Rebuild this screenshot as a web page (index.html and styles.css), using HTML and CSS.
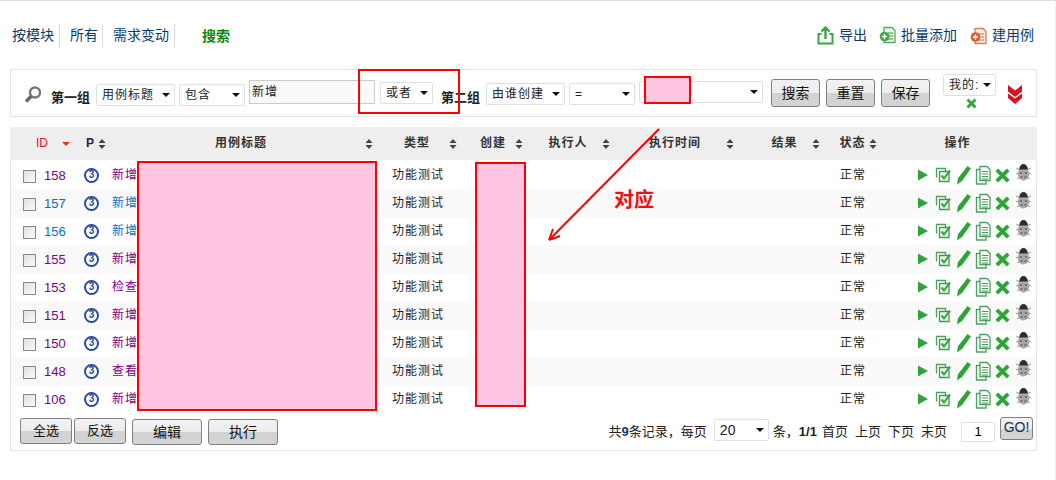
FILE: index.html
```html
<!DOCTYPE html>
<html lang="zh">
<head>
<meta charset="utf-8">
<title>用例列表</title>
<link rel="stylesheet" href="styles.css">
</head>
<body>
<svg class="defs" width="0" height="0" aria-hidden="true">
  <symbol id="sort" viewBox="0 0 9 11"><path d="M4.500 0 8.500 4.500H.5ZM.5 6.500h8L4.500 11Z" fill="#444"/></symbol>
  <symbol id="play" viewBox="0 0 14 14"><path d="M2 1.500 12 7 2 12.500Z" fill="#2ea43a"/></symbol>
  <symbol id="check" viewBox="0 0 16 16"><path d="M1.500 10.500v-9h9v3" fill="none" stroke="#4aa35a" stroke-width="1.300"/><path d="M4.500 4.500h9.500v10H4.500z" fill="#eef7ef" stroke="#3f9c4f" stroke-width="1.300"/><path d="M6.500 8.500 9 11.500 15 3.500" fill="none" stroke="#2ea43a" stroke-width="2"/></symbol>
  <symbol id="pen" viewBox="0 0 16 20"><path d="M11.500 1 15 3.500 6 16 1 19.500 1.800 13.500Z" fill="#2ea43a"/></symbol>
  <symbol id="doc" viewBox="0 0 16 20"><path d="M5 1.500h7l3 3v11H5Z" fill="#fff" stroke="#4aa35a" stroke-width="1.300"/><path d="M5 4.500H1.500v14.500H11v-3.500" fill="none" stroke="#4aa35a" stroke-width="1.300"/><path d="M7 6.500h6M7 9h6M7 11.500h6M7 14h6" stroke="#3f9c4f"/></symbol>
  <symbol id="del" viewBox="0 0 15 15"><path d="M1.800 1.800 13.200 13.200M13.200 1.800 1.800 13.200" stroke="#2ea43a" stroke-width="3.800"/></symbol>
  <symbol id="bug" viewBox="0 0 15 17"><path d="M0 4 4 6M15 4 11 6M0 9.500h3M15 9.500h-3M1 15l3-2M14 15l-3-2" stroke="#999"/><ellipse cx="7.500" cy="10" rx="5.800" ry="6.500" fill="#a8a8a8"/><path d="M3 5.500Q4 0 7.500 0T12 5.500Z" fill="#2e2e2e"/><circle cx="5" cy="9" r="1.100" fill="#666"/><circle cx="10" cy="9" r="1.100" fill="#666"/><circle cx="5.500" cy="13" r="1.100" fill="#666"/><circle cx="9.500" cy="13" r="1.100" fill="#666"/></symbol>
</svg>

<div class="page">
  <header class="topbar">
    <nav class="tabs">
      <a class="tab">按模块</a>
      <a class="tab">所有</a>
      <a class="tab">需求变动</a>
      <a class="tab-active">搜索</a>
    </nav>
    <div class="actions">
      <a class="action">
        <svg class="action-icon" width="17" height="19" viewBox="0 0 17 19"><path d="M4.500 8H1.500v9.500h14V8h-3" fill="none" stroke="#3aa544" stroke-width="2"/><path d="M8.500 13V2M4.500 5.500 8.500 1.500l4 4" fill="none" stroke="#3aa544" stroke-width="2.400"/></svg>
        <span>导出</span>
      </a>
      <a class="action">
        <svg class="action-icon" width="17" height="19" viewBox="0 0 17 19"><path d="M5 1.500h8l3 3v12H5Z" fill="#eaf5ea" stroke="#5aa765" stroke-width="1.300"/><path d="M9 7h5M9 10h5M9 13h5" stroke="#3d8f4b"/><circle cx="5.500" cy="10.500" r="4.800" fill="#3aa544"/><path d="M2.800 10.500h5.400M5.500 7.800v5.400" stroke="#fff" stroke-width="1.500"/></svg>
        <span>批量添加</span>
      </a>
      <a class="action">
        <svg class="action-icon" width="17" height="19" viewBox="0 0 17 19"><path d="M5 2.500h8l3 3v12H5Z" fill="#fbeee6" stroke="#dd7b50" stroke-width="1.300"/><path d="M9 8h5M9 11h5M9 14h5" stroke="#d9693a"/><circle cx="5.500" cy="11" r="4.800" fill="#e0592a"/><path d="M2.800 11h5.400M5.500 8.300v5.400" stroke="#fff" stroke-width="1.500"/></svg>
        <span>建用例</span>
      </a>
    </div>
  </header>

  <section class="search">
    <svg class="search-icon" width="18" height="18" viewBox="0 0 18 18"><circle cx="11" cy="6.500" r="5" fill="#fff" stroke="#777" stroke-width="2.400"/><path d="M7.500 10 2 15.500" stroke="#666" stroke-width="3.600"/></svg>
    <b class="group g1">第一组</b>
    <div class="sel w79 s1"><span>用例标题</span><i class="caret"></i></div>
    <div class="sel w66 s1"><span>包含</span><i class="caret"></i></div>
    <input class="kw" value="新增">
    <div class="sel w53 s2"><span>或者</span><i class="caret"></i></div>
    <b class="group g2">第二组</b>
    <div class="sel w79 s1b"><span>由谁创建</span><i class="caret"></i></div>
    <div class="sel w66 s1b"><span>=</span><i class="caret"></i></div>
    <div class="sel w124 s3"><span></span><i class="caret"></i></div>
    <button class="btn btn-s">搜索</button>
    <button class="btn btn-s">重置</button>
    <button class="btn btn-s">保存</button>
    <div class="mine">
      <div class="sel w53"><span class="mine-text">我的:</span><i class="caret"></i></div>
      <svg class="mine-x" width="11" height="11" viewBox="0 0 11 11"><path d="M1.500 1.500l8 8M9.500 1.500l-8 8" stroke="#3aa544" stroke-width="3"/></svg>
    </div>
    <svg class="more" width="14" height="19" viewBox="0 0 14 19"><path d="M0 0 7 5.500 14 0V6.500L7 12 0 6.500ZM0 8.500 7 13.500 14 8.500V13L7 19 0 13Z" fill="#d9141c"/></svg>
  </section>

  <section class="list">
    <div class="row head">
      <div class="th th-id"><span class="red">ID</span><i class="caret-red"></i></div>
      <div class="th th-p"><span>P</span><svg class="sort"><use href="#sort"/></svg></div>
      <div class="th th-title"><span class="lab">用例标题</span><svg class="sort"><use href="#sort"/></svg></div>
      <div class="th th-type"><span class="lab">类型</span><svg class="sort"><use href="#sort"/></svg></div>
      <div class="th th-user"><span class="lab">创建</span><svg class="sort"><use href="#sort"/></svg></div>
      <div class="th th-runner"><span class="lab">执行人</span><svg class="sort"><use href="#sort"/></svg></div>
      <div class="th th-time"><span class="lab">执行时间</span><svg class="sort"><use href="#sort"/></svg></div>
      <div class="th th-result"><span class="lab">结果</span><svg class="sort"><use href="#sort"/></svg></div>
      <div class="th th-state"><span class="lab">状态</span><svg class="sort"><use href="#sort"/></svg></div>
      <div class="th th-op"><span class="lab">操作</span></div>
    </div>
    <div id="rows"></div>
    <footer class="foot">
      <div class="foot-left">
        <button class="btn btn-a">全选</button>
        <button class="btn btn-a">反选</button>
        <button class="btn btn-b">编辑</button>
        <button class="btn btn-b">执行</button>
      </div>
      <div class="pager">
        <span class="pg-text">共<b class="count">9</b>条记录，每页</span>
        <div class="sel w55 pg-size"><span>20</span><i class="caret"></i></div>
        <span class="pg-text">条，<b>1/1</b></span>
        <a class="pg-first">首页</a><a>上页</a><a>下页</a><a>末页</a>
        <input class="pg" value="1">
        <button class="btn btn-go">GO!</button>
      </div>
    </footer>
  </section>
</div>

<div class="mask mask-title"></div>
<div class="mask mask-user"></div>
<div class="mask mask-value"></div>
<div class="frame"></div>
<svg class="arrow" width="120" height="120" viewBox="0 0 120 120"><path d="M114 3 5 113" stroke="#f00" stroke-width="2" fill="none"/><path d="M4 114 8 103M4 114 15 110" stroke="#f00" stroke-width="2" fill="none"/></svg>
<div class="note">对应</div>
<script src="app.js"></script>
</body>
</html>
```
FILE: app.js
```js
var data = [
  ["158", "新增", 1], ["157", "新增", 0], ["156", "新增", 0],
  ["155", "新增", 1], ["153", "检查", 1], ["151", "新增", 1],
  ["150", "新增", 1], ["148", "查看", 1], ["106", "新增", 1]
];
var html = "";
var ops = [["play", 14, 14, "op-play"], ["check", 16, 16, "op-check"], ["pen", 16, 20, "op-pen"], ["doc", 16, 20, "op-doc"], ["del", 15, 15, "op-del"], ["bug", 15, 17, "op-bug"]];
data.forEach(function (r) {
  var cls = r[2] ? "visited" : "fresh";
  var o = ops.map(function (i) {
    return '<svg class="' + i[3] + '" width="' + i[1] + '" height="' + i[2] + '"><use href="#' + i[0] + '"/></svg>';
  }).join("");
  html += '<div class="row item">' +
    '<div class="td td-id"><span class="cb"></span><a class="' + cls + '">' + r[0] + '</a></div>' +
    '<div class="td td-p"><span class="badge">3</span></div>' +
    '<div class="td td-title"><a class="' + cls + '">' + r[1] + '</a></div>' +
    '<div class="td td-type">功能测试</div><div class="td"></div><div class="td"></div><div class="td"></div><div class="td"></div>' +
    '<div class="td td-state">正常</div>' +
    '<div class="td td-ops">' + o + '</div></div>';
});
document.getElementById("rows").innerHTML = html;
```
FILE: styles.css
```css
* { box-sizing: border-box; }
html, body { margin: 0; padding: 0; background: #fff; }
body {
  width: 1056px; height: 480px; overflow: hidden; position: relative;
  border-top: 1px solid #ddd; border-right: 1px solid #eee;
  font: 13px/1.2 "Liberation Sans", "Noto Sans CJK SC", sans-serif;
  color: #222;
}
.defs { position: absolute; }
.page { width: 1027px; margin-left: 10px; }

/* top bar */
.topbar { height: 68px; display: flex; justify-content: space-between; align-items: flex-start; padding: 23px 3px 0 2px; }
.tabs { display: flex; align-items: center; font-size: 14px; color: #0b3b6b; }
.tab { height: 24px; line-height: 23px; padding-right: 5px; white-space: nowrap; border-right: 1px solid #ddd; }
.tab:nth-child(1) { margin-right: 10px; }
.tab:nth-child(2) { padding-right: 4px; margin-right: 10px; }
.tab:nth-child(3) { padding-right: 5px; margin-right: 27px; }
.tab-active { color: #0a8a0a; font-weight: bold; }
.actions { display: flex; font-size: 14px; color: #0b3b6b; padding-top: 1px; }
.action { display: flex; align-items: center; gap: 5px; height: 21px; white-space: nowrap; }
.action + .action { margin-left: 12px; }
.action:last-child { margin-left: 13px; }

/* search */
.search { height: 48px; border: 1px solid #e4e4e4; display: flex; align-items: flex-start; }
.search-icon { margin: 16px 0 0 13px; }
.group { font-size: 13px; white-space: nowrap; color: #222; }
.g1 { margin: 20px 5px 0 9px; width: 40px; }
.g2 { margin: 20px 5px 0 8px; width: 40px; }
.sel {
  height: 22px; border: 1px solid #dcdfe6; border-radius: 2px; background: #fff; display: flex; align-items: center;
  justify-content: space-between; padding: 0 4px 0 5px; font-size: 12px; letter-spacing: 1px; color: #222; flex: none; overflow: hidden; white-space: nowrap;
}
.caret { flex: none; width: 0; height: 0; border: 4px solid transparent; border-top: 4px solid #111; border-bottom: 0; }
.w79 { width: 79px; } .w66 { width: 66px; } .w53 { width: 53px; } .w55 { width: 55px; } .w124 { width: 124px; }
.s1 { margin: 14px 4px 0 0; }
.s1b { margin: 13px 4px 0 0; }
.s2 { margin: 12px 0 0 5px; }
.s3 { margin: 11px 8px 0 0; }
.kw { width: 126px; height: 24px; margin: 10px 0 0 0; padding: 0 0 4px 2px; border: 1px solid #ccc; background: #f9f9f9; font: 12px "Liberation Sans", "Noto Sans CJK SC", sans-serif; letter-spacing: 1px; color: #222; }
.btn {
  border: 1px solid #808080; border-radius: 3px; padding: 0 0 3px; color: #111; flex: none;
  background: linear-gradient(#f2f2f2 0, #ececec 50%, #d2d2d2 52%, #d4d4d4 100%);
  font: 13px "Liberation Sans", "Noto Sans CJK SC", sans-serif;
}
.btn-s { width: 49px; height: 28px; margin: 9px 6px 0 0; font-size: 14px; }
.mine { display: flex; flex-direction: column; align-items: center; margin: 4px 0 0 7px; width: 53px; }
.mine-text { letter-spacing: 1px; }
.mine-x { margin: 2px 0 0 4px; }
.more { margin: 15px 0 0 12px; }

/* table */
.list { margin-top: 10px; height: 324px; border: 1px solid #e4e4e4; border-top: 0; }
.row { display: grid; grid-template-columns: 69px 28px 272px 84px 66px 87px 124px 86px 57px 153px; }
.head { height: 33px; background: #eee; margin: 0 -1px 1px; }
.th { display: flex; align-items: center; padding-right: 6px; font-weight: bold; font-size: 12px; color: #333; letter-spacing: 1px; }
.lab { flex: 1; text-align: center; }
.sort { width: 8px; height: 10px; flex: none; }
.th-id { padding-left: 26px; font-weight: normal; }
.red { color: #f01010; letter-spacing: 0; font-size: 12px; }
.caret-red { margin-left: 14px; width: 0; height: 0; border: 4px solid transparent; border-top: 4px solid #f03010; border-bottom: 0; }
.th-p { padding-left: 7px; gap: 4px; color: #224; letter-spacing: 0; }
.th-title { padding-left: 10px; }
.th-type { padding-left: 6px; }
.th-user { padding-left: 8px; }
.th-runner { padding-left: 5px; }
.th-time { padding-left: 8px; }
.th-result { padding-left: 17px; }
.th-state { padding-left: 10px; }
.th-op { padding-right: 4px; }
.item { height: 28px; }
.item:nth-child(even) { background: #f9f9f9; }
.td { display: flex; align-items: center; font-size: 12px; min-width: 0; letter-spacing: 1px; }
.td-id { padding: 2px 0 0 12px; font-size: 13px; letter-spacing: 0; }
.cb { width: 13px; height: 13px; border: 1px solid #8a8a8a; background: linear-gradient(135deg, #e0e0e0, #fafafa); margin-right: 8px; }
.td-p { padding-left: 4px; }
.badge { width: 15px; height: 15px; border: 2px solid #2b4a9b; border-radius: 50%; display: flex; align-items: center; justify-content: center; font-size: 10px; line-height: 1; font-weight: bold; color: #2b4a9b; letter-spacing: 0; }
.td-title { padding-left: 4px; }
.td-type { padding-left: 12px; white-space: nowrap; }
.td-state { padding-left: 13px; }
.visited { color: #800080; }
.fresh { color: #0a6ccc; }
.td-ops { padding-left: 32px; }
.op-check { margin-left: 5px; }
.op-pen { margin-left: 5px; }
.op-doc { margin-left: 3px; }
.op-del { margin-left: 4px; }
.op-bug { margin: -5px 0 0 6px; }

/* footer */
.foot { display: flex; justify-content: space-between; align-items: flex-start; padding: 5px 3px 0 9px; }
.foot-left { display: flex; }
.btn-a { width: 52px; height: 26px; margin-right: 2px; }
.btn-a + .btn-b { margin-left: 4px; }
.btn-b { width: 70px; height: 26px; margin: 1px 6px 0 0; font-size: 14px; }
.pager { display: flex; align-items: center; font-size: 13px; gap: 7px; height: 26px; }
.pg-text, .pager a { margin-top: 2px; white-space: nowrap; }
.pg-size { margin: -2px -3px 0 0; font-size: 14px; letter-spacing: 0; }
.pg-first { margin-left: -2px; }
.count { color: #0b3b6b; }
.pg { width: 34px; height: 20px; margin: 1px -2px 0 7px; border: 1px solid #dcdfe6; border-radius: 2px; text-align: center; font: 13px "Liberation Sans", sans-serif; }
.btn-go { width: 33px; height: 23px; font-size: 14px; margin-top: -5px; color: #1a2e50; }

/* annotations drawn over the screenshot */
.mask { position: absolute; background: #ffc6e3; border: 2px solid #f00; }
.mask-title { left: 137px; top: 160px; width: 240px; height: 250px; }
.mask-user { left: 475px; top: 161px; width: 51px; height: 245px; }
.mask-value { left: 644px; top: 75px; width: 47px; height: 28px; }
.frame { position: absolute; left: 358px; top: 68px; width: 102px; height: 45px; border: 2px solid #f00; }
.arrow { position: absolute; left: 545px; top: 125px; }
.note { position: absolute; left: 614px; top: 187px; font-size: 20px; font-weight: bold; color: #f01010; line-height: 24px; }
```
